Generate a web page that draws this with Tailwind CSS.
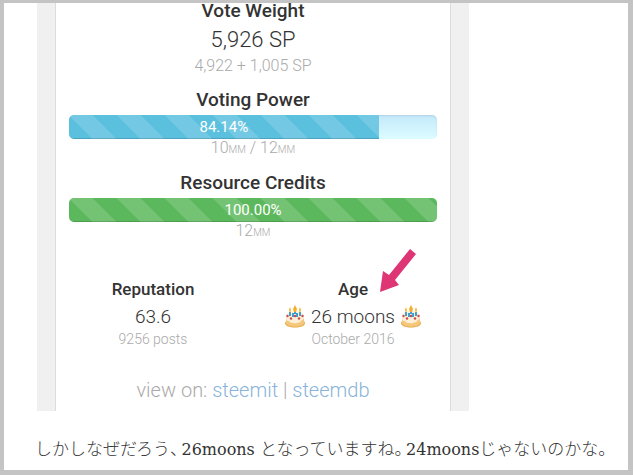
<!DOCTYPE html>
<html lang="ja">
<head>
  <meta charset="UTF-8" />
  <meta name="viewport" content="width=device-width, initial-scale=1.0"/>
  <title>26 moons</title>
  <script src="https://cdn.jsdelivr.net/npm/@tailwindcss/browser@4"></script>
</head>
<body class="min-h-screen bg-white border-t-3 border-l-4 border-r-5 border-b-5 border-[#c4c4c4] font-['Roboto',sans-serif] text-[#333]">

  <!-- Account panel -->
  <section class="ml-[33px] mr-[159px] bg-[#f0f0f0] px-[18px]">
    <div class="relative bg-white border-x border-[#dcdcdc] px-[13px] pb-[7px] text-center">

      <h2 class="text-[19px] leading-4 font-medium">Vote Weight</h2>
      <p class="mt-[9px] text-[22px] leading-6 font-light">5,926 SP</p>
      <p class="mt-1 text-[16px] leading-5 font-light text-[#aaa]">4,922 + 1,005 SP</p>

      <h2 id="voting" class="mt-3 text-[19px] leading-6 font-medium">Voting Power</h2>
      <div role="progressbar" aria-labelledby="voting" aria-valuenow="84.14" class="mt-[3px] h-6 rounded-[5px] overflow-hidden bg-linear-to-b from-[#c4e9fb] to-[#dcfcff] shadow-[inset_0_1px_2px_rgba(0,0,0,0.1)]">
        <div class="h-full bg-[#5bc0de] bg-[linear-gradient(45deg,rgba(255,255,255,.15)_25%,transparent_25%,transparent_50%,rgba(255,255,255,.15)_50%,rgba(255,255,255,.15)_75%,transparent_75%)] bg-size-[48px_48px] shadow-[inset_0_-1px_0_rgba(0,0,0,0.15)] text-white text-[15px] leading-6" style="width: 84.14%">84.14%</div>
      </div>
      <p class="text-[16px] leading-[18px] font-light text-[#aaa]">10<span class="text-[10px]">MM</span> / 12<span class="text-[10px]">MM</span></p>

      <h2 id="credits" class="mt-3 text-[19px] leading-6 font-medium">Resource Credits</h2>
      <div role="progressbar" aria-labelledby="credits" aria-valuenow="100" class="mt-[3px] h-6 rounded-[5px] overflow-hidden bg-[#dff0d8]">
        <div class="h-full bg-[#5cb85c] bg-[linear-gradient(45deg,rgba(255,255,255,.15)_25%,transparent_25%,transparent_50%,rgba(255,255,255,.15)_50%,rgba(255,255,255,.15)_75%,transparent_75%)] bg-size-[48px_48px] shadow-[inset_0_-1px_0_rgba(0,0,0,0.15)] text-white text-[15px] leading-6" style="width: 100%">100.00%</div>
      </div>
      <p class="text-[16px] leading-[18px] font-light text-[#aaa]">12<span class="text-[10px]">MM</span></p>

      <div class="-mx-4 mt-[35px] grid grid-cols-2">
        <div>
          <h3 class="text-[17px] leading-6 font-medium">Reputation</h3>
          <p class="mt-1 text-[19px] leading-6 font-light">63.6</p>
          <p class="text-[14px] leading-5 font-light text-[#aaa]">9256 posts</p>
        </div>
        <div>
          <h3 class="text-[17px] leading-6 font-medium">Age</h3>
          <p class="mt-1 flex justify-center items-center gap-1.5 text-[19px] leading-6 font-light">
            <svg class="w-5 h-6" viewBox="0 0 20 24" aria-hidden="true">
              <defs>
                <g id="cake">
                  <path d="M0 18c0 6 20 6 20 0l-1-2H1z" fill="#e3a63e"/>
                  <path d="M1 11v7c1 5 17 5 18 0v-7z" fill="#f5c77c"/>
                  <ellipse cx="10" cy="11" rx="9" ry="5" fill="#fdeed6"/>
                  <path d="M1 11c0 2 0 5 2 5s2 2 4 2 3 1 5 0 3 0 4-2 3 0 3-5z" fill="#fdeed6"/>
                  <path d="M5 7v4M8 8v4M10 5v4M12 8v4M15 7v4" stroke="#3f9fd0" stroke-width="2"/>
                  <path d="M5 2l1 3-1 3-1-3zM10 0l2 4-1 3H9L8 4zM15 2l1 3-1 3-1-3z" fill="#f6ad28"/>
                  <g fill="#c94a55">
                    <circle cx="2.500" cy="11" r="1.200"/>
                    <circle cx="6" cy="13.500" r="1.200"/>
                    <circle cx="10" cy="11" r="1.200"/>
                    <circle cx="14" cy="13.500" r="1.200"/>
                    <circle cx="17.500" cy="11" r="1.200"/>
                  </g>
                </g>
              </defs>
              <use href="#cake"/>
            </svg>
            26 moons
            <svg class="w-5 h-6" viewBox="0 0 20 24" aria-hidden="true"><use href="#cake"/></svg>
          </p>
          <p class="text-[14px] leading-5 font-light text-[#aaa]">October 2016</p>
        </div>
      </div>

      <p class="mt-[27px] text-[20px] leading-7 font-light text-[#aaa]">view on: <a href="#" class="text-[#89b3d9]">steemit</a> | <a href="#" class="text-[#89b3d9]">steemdb</a></p>

      <!-- Arrow pointing at the age -->
      <svg class="absolute top-[245px] right-[34px] w-9 h-11" viewBox="0 0 36 44" aria-hidden="true">
        <path d="M30 1 36 6 15 32 19 37 0 44 3 23 9 27z" fill="#de3574"/>
      </svg>
    </div>
  </section>

  <p class="ml-[31px] mt-6 whitespace-nowrap text-[17px] leading-7 font-light font-['DejaVu_Serif','Noto_Sans_CJK_JP',serif] [font-feature-settings:'halt']">しかしなぜだろう、<span class="ml-[3px] text-[16px]">26moons </span>となっていますね。<span class="ml-[3px] text-[16px]">24moons</span>じゃないのかな。</p>

</body>
</html>
